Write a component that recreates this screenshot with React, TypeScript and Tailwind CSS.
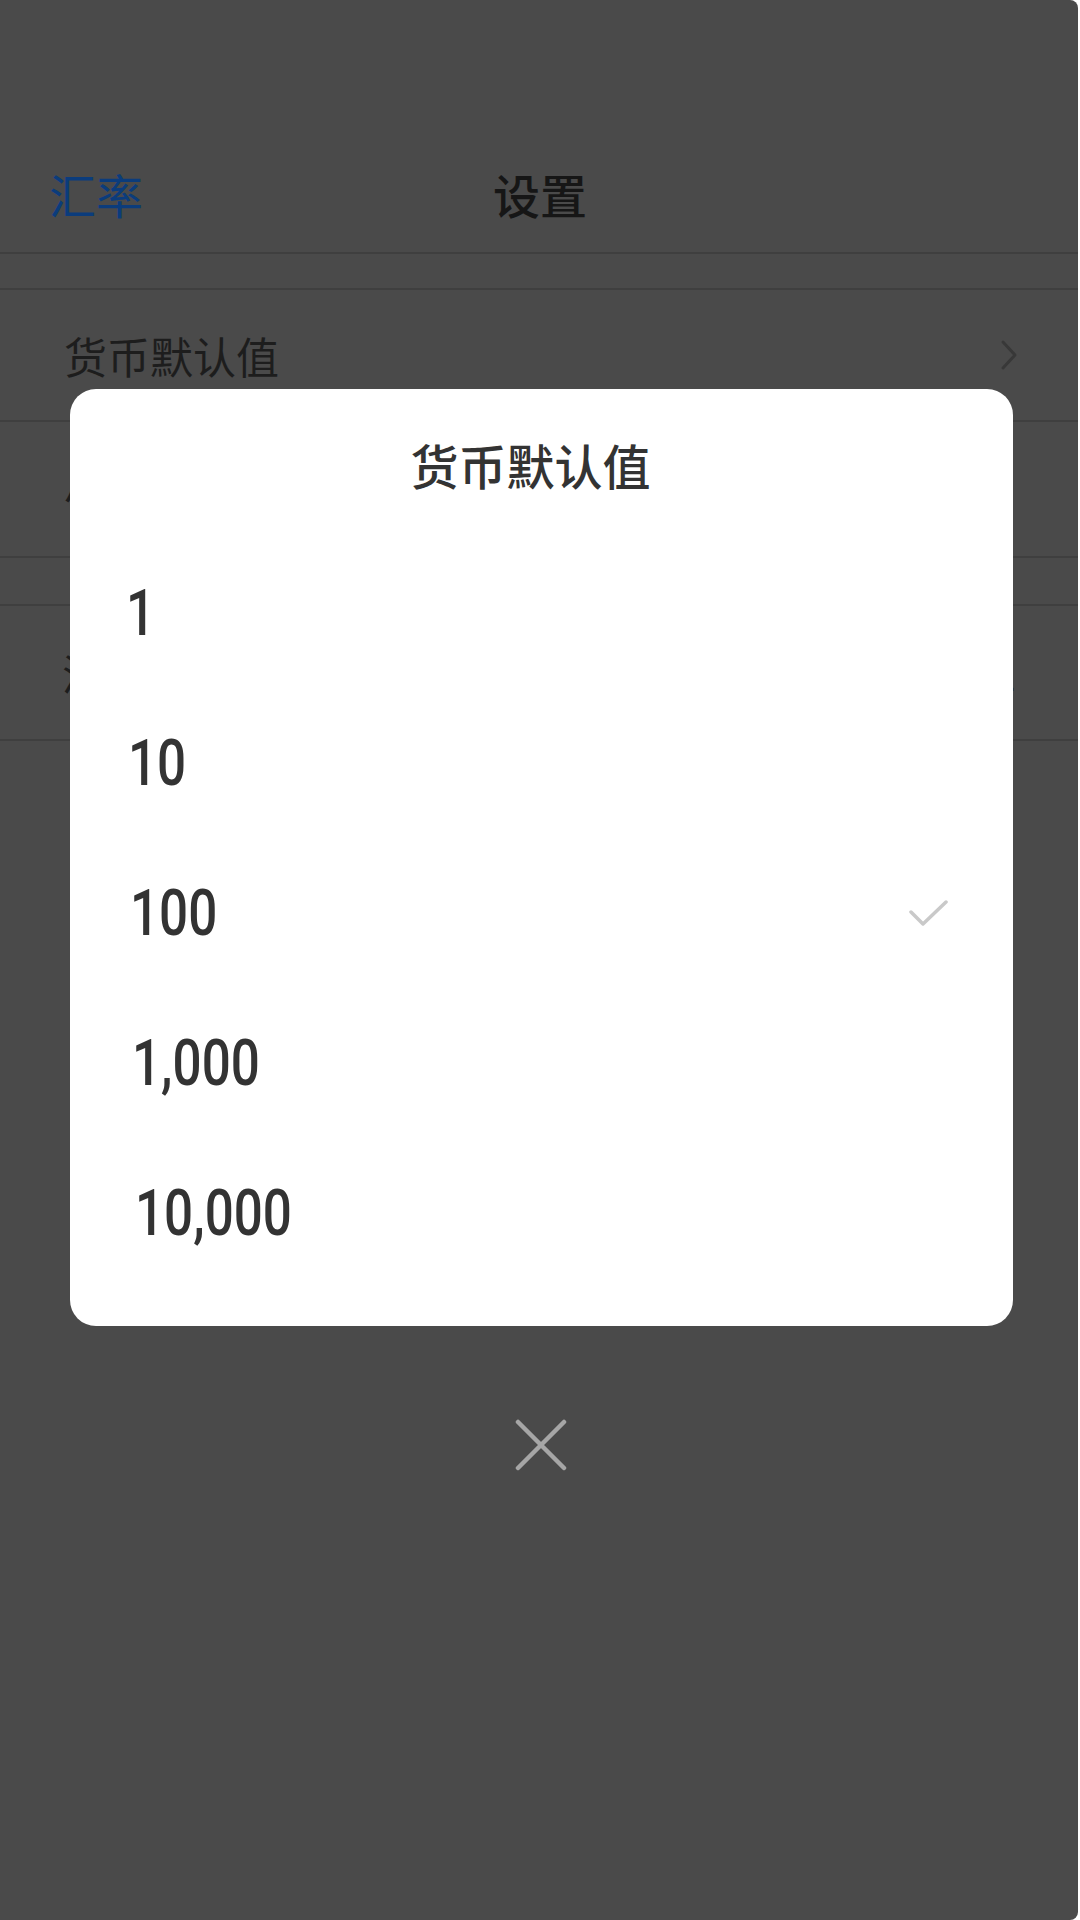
import React from 'react';

const options = [
  { label: '1', indent: 'pl-[56px]' },
  { label: '10', indent: 'pl-[58px]' },
  { label: '100', indent: 'pl-[60px]' },
  { label: '1,000', indent: 'pl-[62px]' },
  { label: '10,000', indent: 'pl-[65px]' },
];

const selected = '100';

const Chevron: React.FC = () => (
  <svg width="18" height="32" viewBox="0 0 18 32" fill="none">
    <path d="M3 3 L15 16 L3 29" stroke="#383838" strokeWidth="3" strokeLinecap="round" strokeLinejoin="round" />
  </svg>
);

export default function App() {
  return (
    <div className="w-[1080px] h-[1920px] bg-white font-['Noto_Sans_CJK_SC','Noto_Sans',sans-serif]">
      <div className="relative w-[1078px] h-[1920px] bg-[#4a4a4a] rounded-tr-[8px] rounded-br-[8px] overflow-hidden">
        {/* page behind the dialog, already dimmed */}
        <div className="h-[254px] grid grid-cols-3 items-center pt-[134px] border-b-2 border-[#3f3f3f]">
          <span className="pl-[49px] text-[47px] leading-none text-[#0b3c7c]">汇率</span>
          <span className="text-center text-[47px] leading-none font-medium text-[#161616] pl-[2px]">设置</span>
          <span />
        </div>
        <div className="h-[34px]" />
        <div className="border-t-2 border-[#3f3f3f]">
          <div className="h-[132px] flex items-center justify-between pl-[64px] pr-[60px] border-b-2 border-[#3f3f3f]">
            <span className="text-[43px] leading-none text-[#1d1d1d]">货币默认值</span>
            <Chevron />
          </div>
          <div className="h-[136px] flex items-center justify-between pl-[64px] pr-[64px] border-b-2 border-[#3f3f3f]">
            <span className="text-[43px] leading-none text-[#1d1d1d]">小数位数</span>
            <Chevron />
          </div>
        </div>
        <div className="h-[46px]" />
        <div className="border-t-2 border-[#3f3f3f]">
          <div className="h-[135px] flex items-center justify-between pl-[62px] pr-[62px] border-b-2 border-[#3f3f3f]">
            <span className="text-[43px] leading-none text-[#1d1d1d]">汇率更新</span>
            <span className="text-[43px] leading-none text-[#1d1d1d]">1</span>
          </div>
        </div>

        {/* dialog */}
        <div className="absolute left-[70px] top-[389px] w-[943px] h-[937px] bg-white rounded-[26px] flex flex-col">
          <div className="h-[150px] flex items-center justify-center pr-[22px]">
            <span className="text-[48px] leading-none font-medium text-[#333333]">货币默认值</span>
          </div>
          {options.map((o) => (
            <div key={o.label} className={`h-[150px] flex items-center justify-between pr-[64px] ${o.indent}`}>
              <span className="inline-block origin-left scale-x-[0.8] font-['Roboto',sans-serif] font-medium text-[64px] leading-none text-[#333333]">
                {o.label}
              </span>
              {o.label === selected && (
                <svg width="40" height="30" viewBox="0 0 40 30" fill="none">
                  <path d="M2 13 L14 25 L37 3" stroke="#c9c9c9" strokeWidth="3.5" strokeLinecap="round" strokeLinejoin="round" />
                </svg>
              )}
            </div>
          ))}
        </div>

        {/* close */}
        <div className="absolute left-[515px] top-[1419px] w-[52px] h-[52px]">
          <svg width="52" height="52" viewBox="0 0 52 52" fill="none">
            <path d="M3 3 L49 49 M49 3 L3 49" stroke="#a6a6a6" strokeWidth="4.5" strokeLinecap="round" />
          </svg>
        </div>
      </div>
    </div>
  );
}
